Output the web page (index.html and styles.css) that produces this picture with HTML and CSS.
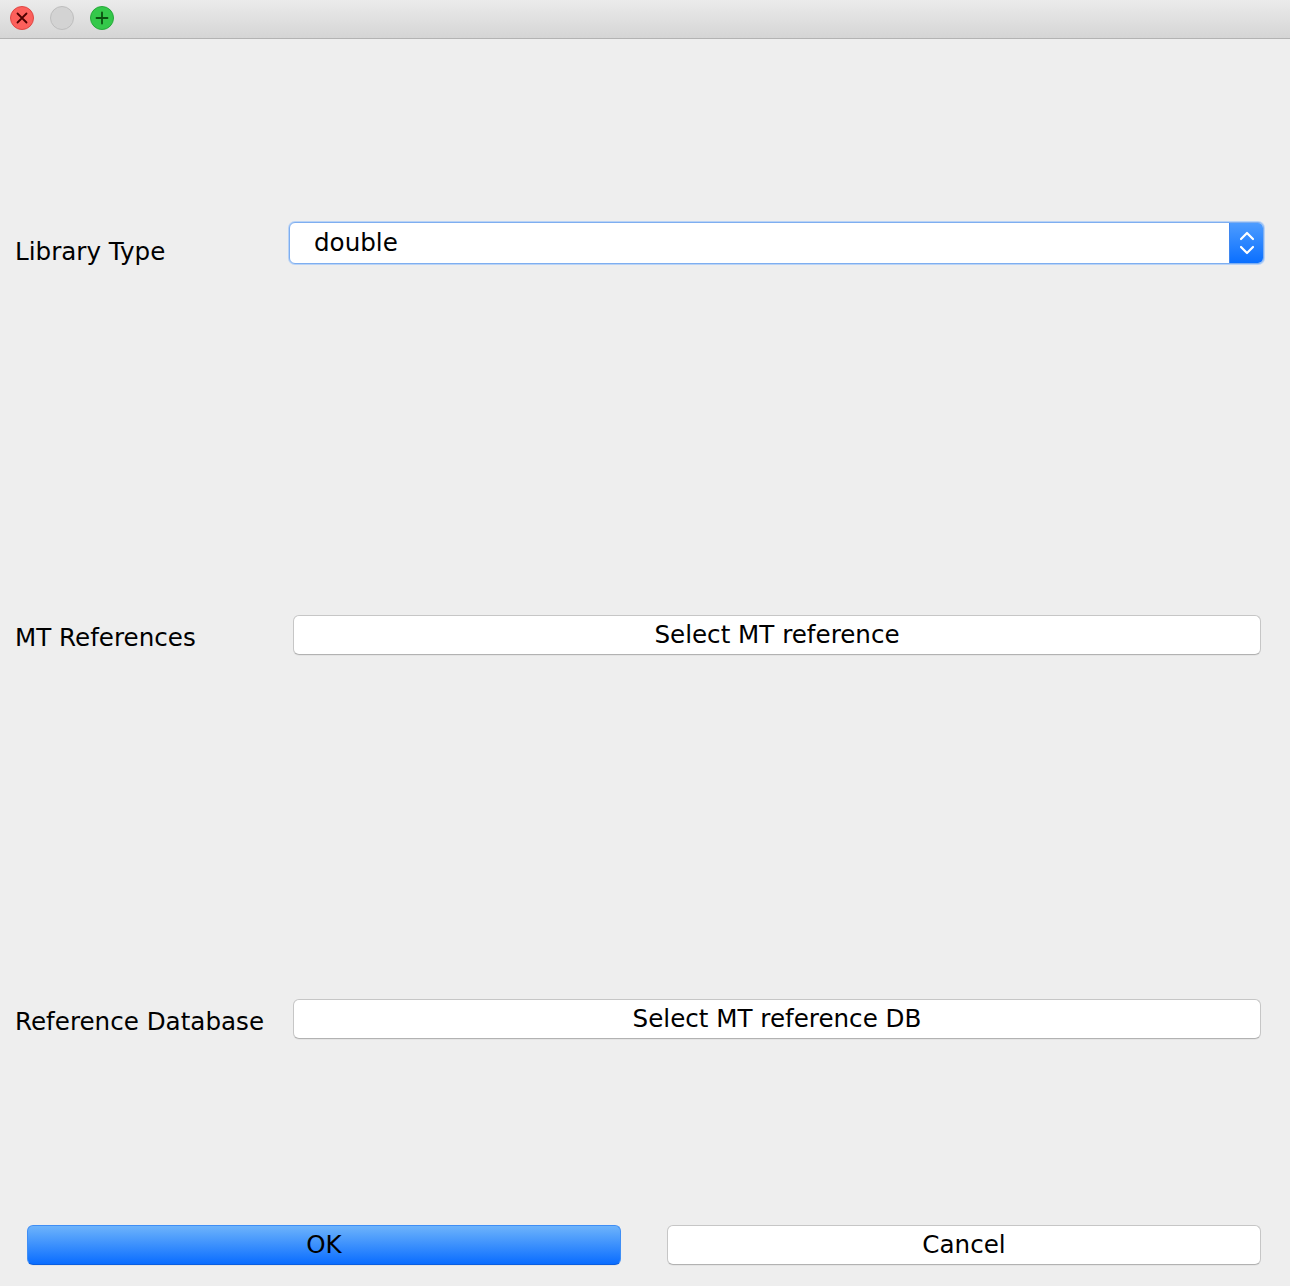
FILE: index.html
```html
<!DOCTYPE html>
<html>
<head>
<meta charset="utf-8">
<link rel="stylesheet" href="styles.css">
</head>
<body>
<div class="window">
  <div class="titlebar">
    <span class="light light-close">
      <svg width="16" height="16" viewBox="0 0 16 16"><path d="M3.5 3.5 L12.5 12.5 M12.5 3.5 L3.5 12.5" stroke="#4d0000" stroke-width="1.8" stroke-linecap="round"/></svg>
    </span>
    <span class="light light-min"></span>
    <span class="light light-max">
      <svg width="16" height="16" viewBox="0 0 16 16"><path d="M8 2.5 V13.5 M2.5 8 H13.5" stroke="#0b4f10" stroke-width="1.8" stroke-linecap="round"/></svg>
    </span>
  </div>
  <div class="content">
    <div class="form">
      <div class="row row-lib">
        <div class="label">Library Type</div>
        <div class="combo">
          <span class="combo-value">double</span>
          <span class="stepper">
            <svg width="20" height="32" viewBox="0 0 20 32"><path d="M4 12 L10 6 L16 12 M4 20 L10 26 L16 20" fill="none" stroke="#fff" stroke-width="2.2" stroke-linecap="round" stroke-linejoin="round"/></svg>
          </span>
        </div>
      </div>
      <div class="row row-btn row-mt">
        <div class="label">MT References</div>
        <button class="btn">Select MT reference</button>
      </div>
      <div class="row row-btn row-db">
        <div class="label">Reference Database</div>
        <button class="btn">Select MT reference DB</button>
      </div>
    </div>
    <div class="actions">
      <button class="btn btn-primary">OK</button>
      <button class="btn btn-cancel">Cancel</button>
    </div>
  </div>
</div>
</body>
</html>
```
FILE: styles.css
```css
html, body {
  margin: 0;
  padding: 0;
  background: #eeeeee;
}
body {
  font-family: "DejaVu Sans", "Liberation Sans", sans-serif;
  color: #000;
}
.window {
  width: 1290px;
  height: 1286px;
  display: flex;
  flex-direction: column;
  background: #eeeeee;
  overflow: hidden;
}
.titlebar {
  height: 39px;
  box-sizing: border-box;
  border-bottom: 1px solid #b3b3b3;
  background: linear-gradient(#ebebeb, #d5d5d5);
  display: flex;
  align-items: center;
  padding-left: 10px;
  gap: 16px;
  flex-shrink: 0;
}
.light {
  width: 24px;
  height: 24px;
  border-radius: 50%;
  box-sizing: border-box;
  display: flex;
  align-items: center;
  justify-content: center;
  margin-top: -2px;
}
.light-close { background: #fc605c; border: 1px solid #df4744; }
.light-min { background: #d3d3d3; border: 1px solid #bebebe; }
.light-max { background: #34c84a; border: 1px solid #26a93a; }

.content {
  flex: 1;
  display: flex;
  flex-direction: column;
  padding: 0 26px 21px 15px;
}
.form {
  flex: 1;
  display: flex;
  flex-direction: column;
}
.row {
  display: grid;
  grid-template-columns: 274px 1fr;
  align-items: center;
}
.row-lib { margin-top: 181px; height: 43px; }
.row-mt { margin-top: 352px; height: 40px; }
.row-db { margin-top: 344px; height: 40px; }
.label {
  font-size: 24.6px;
  white-space: nowrap;
}
.row-lib .label { padding-top: 17px; }
.row-btn .label { padding-top: 4px; }

.combo {
  height: 42px;
  box-sizing: border-box;
  background: #fff;
  border: 1px solid #7eaef0;
  border-radius: 6px;
  box-shadow: 0 0 0 1px #b9d3f6;
  display: flex;
  align-items: stretch;
  overflow: hidden;
}
.combo-value {
  flex: 1;
  font-size: 24.6px;
  padding-left: 24px;
  line-height: 40px;
}
.stepper {
  width: 33px;
  background: linear-gradient(#4d9cff, #0a6fff);
  display: flex;
  align-items: center;
  justify-content: center;
  border-left: 1px solid #3f87f0;
}

.btn {
  font-family: inherit;
  font-size: 24.6px;
  color: #000;
  height: 40px;
  box-sizing: border-box;
  background: #fff;
  border: 1px solid #c6c6c6;
  border-bottom-color: #b2b2b2;
  border-radius: 6px;
  padding: 0;
  line-height: 36px;
  box-shadow: 0 1px 0 rgba(0,0,0,0.04);
}
.row-btn .btn {
  margin-left: 4px;
  margin-right: 3px;
  width: calc(100% - 7px);
}

.actions {
  display: grid;
  grid-template-columns: 594px 594px;
  justify-content: space-between;
  padding-left: 12px;
  padding-right: 3px;
  height: 40px;
}
.btn-primary {
  background: linear-gradient(#6db3fb, #0a6dff);
  border: 1px solid #3f8ef5;
  border-bottom-color: #0a5ee0;
}
```
